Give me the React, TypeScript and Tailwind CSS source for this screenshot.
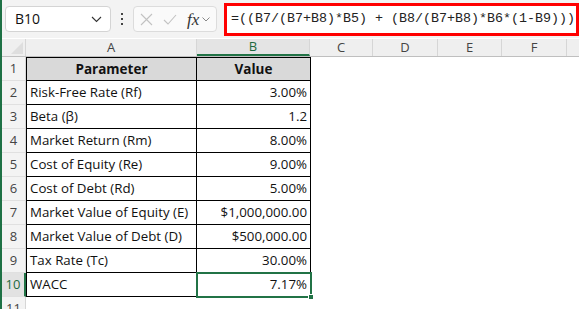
import React from 'react';

const rows: [string, string][] = [
    ['Risk-Free Rate (Rf)', '3.00%'],
    ['Beta (β)', '1.2'],
    ['Market Return (Rm)', '8.00%'],
    ['Cost of Equity (Re)', '9.00%'],
    ['Cost of Debt (Rd)', '5.00%'],
    ['Market Value of Equity (E)', '$1,000,000.00'],
    ['Market Value of Debt (D)', '$500,000.00'],
    ['Tax Rate (Tc)', '30.00%'],
    ['WACC', '7.17%'],
];

const cols = [
    { name: 'C', w: 'w-[63px]' },
    { name: 'D', w: 'w-[65px]' },
    { name: 'E', w: 'w-[64px]' },
    { name: 'F', w: 'w-[65px]' },
];

export default function App() {
    return (
        <div className="w-[579px] h-[309px] overflow-hidden bg-white border-l-2 border-[#1e7145] font-['Open_Sans',sans-serif] text-[#111]">
            {/* formula bar */}
            <div className="h-[38px] bg-[#f3f3f3] flex items-center">
                <div className="ml-[3px] w-[106px] h-[26px] bg-white border border-[#d4d4d4] rounded-[4px] flex items-center justify-between pl-[9px] pr-[8px]">
                    <span className="text-[14px] leading-none">B10</span>
                    <svg width="11" height="7" viewBox="0 0 11 7" fill="none" stroke="#333" strokeWidth="1.1">
                        <path d="M1 1l4.5 4.5L10 1" />
                    </svg>
                </div>
                <div className="w-[22px] flex flex-col items-center gap-[3px]">
                    <span className="w-[2px] h-[2px] bg-[#444]" />
                    <span className="w-[2px] h-[2px] bg-[#444]" />
                    <span className="w-[2px] h-[2px] bg-[#444]" />
                </div>
                <div className="w-[84px] h-[26px] bg-[#fafafa] border border-[#dcdcdc] rounded-[4px] flex items-center pl-[6px] gap-[10px]">
                    <svg width="13" height="13" viewBox="0 0 13 13" stroke="#c2c2c2" strokeWidth="1.1">
                        <path d="M1 1l11 11M12 1L1 12" />
                    </svg>
                    <svg width="14" height="11" viewBox="0 0 14 11" fill="none" stroke="#c2c2c2" strokeWidth="1.1">
                        <path d="M1 6l4 4L13 1" />
                    </svg>
                    <div className="flex items-center gap-[3px]">
                        <span className="font-['Liberation_Serif',serif] italic text-[17px] leading-none text-[#333]">fx</span>
                        <svg width="8" height="5" viewBox="0 0 8 5" fill="none" stroke="#888" strokeWidth="1">
                            <path d="M0.5 0.5l3.5 3.5L7.5 0.5" />
                        </svg>
                    </div>
                </div>
                <div className="ml-[7px] flex-1 h-[33px] border-[3px] border-[#ff0000] bg-white flex items-center pl-[4px]">
                    <span className="font-['Liberation_Mono',monospace] text-[13.33px] leading-none text-[#222] whitespace-pre">
                        =((B7/(B7+B8)*B5) + (B8/(B7+B8)*B6*(1-B9)))
                    </span>
                </div>
            </div>

            {/* column headers */}
            <div className="mt-[1px] h-[18px] flex bg-[#efefef] border-b border-[#bfbfbf] text-[13px] text-[#444]">
                <div className="w-[24px] border-r border-[#d6d6d6] flex items-end justify-end p-[2px]">
                    <svg width="12" height="12" viewBox="0 0 12 12">
                        <path d="M12 0V12H0Z" fill="#dedede" />
                    </svg>
                </div>
                <div className="w-[171px] border-r border-[#d6d6d6] flex items-center justify-center">A</div>
                <div className="w-[113px] border-r border-[#d6d6d6] border-b-2 border-b-[#217346] bg-[#e4e4e4] text-[#1e6a40] flex items-center justify-center">B</div>
                {cols.map(c => (
                    <div key={c.name} className={`${c.w} border-r border-[#d6d6d6] flex items-center justify-center`}>{c.name}</div>
                ))}
                <div className="flex-1" />
            </div>

            {/* rows */}
            <div className="flex text-[13.3px]">
                <div className="w-[24px] bg-[#f3f3f3] text-[13px] text-[#444]">
                    {Array.from({ length: 11 }).map((_, i) => (
                        <div
                            key={i}
                            className={`h-[24px] border-b border-[#e0e0e0] flex items-center justify-center ${i === 9 ? 'bg-[#e2e2e2] text-[#1e6a40] border-r-2 border-r-[#217346]' : 'border-r border-r-[#d6d6d6]'}`}
                        >
                            {i + 1}
                        </div>
                    ))}
                </div>
                <div className="w-[285px] shrink-0">
                    <div className="h-[24px] flex bg-[#d9d9d9] border border-black font-bold text-[13.5px]">
                        <div className="w-[170px] shrink-0 border-r border-black flex items-center justify-center">Parameter</div>
                        <div className="flex-1 flex items-center justify-center">Value</div>
                    </div>
                    {rows.map(([label, value], i) => (
                        <div key={label} className="h-[24px] flex border-x border-b border-black">
                            <div className="w-[170px] shrink-0 border-r border-black flex items-center pl-[3px] whitespace-nowrap overflow-hidden">{label}</div>
                            <div className="relative flex-1 flex items-center justify-end pr-[3px]">
                                {value}
                                {i === rows.length - 1 && (
                                    <>
                                        <div className="absolute -left-px -top-px -right-[2px] -bottom-[2px] border-2 border-[#217346]" />
                                        <div className="absolute -right-[4px] -bottom-[4px] w-[6px] h-[6px] bg-[#217346] border border-white" />
                                    </>
                                )}
                            </div>
                        </div>
                    ))}
                </div>
            </div>
        </div>
    );
}
